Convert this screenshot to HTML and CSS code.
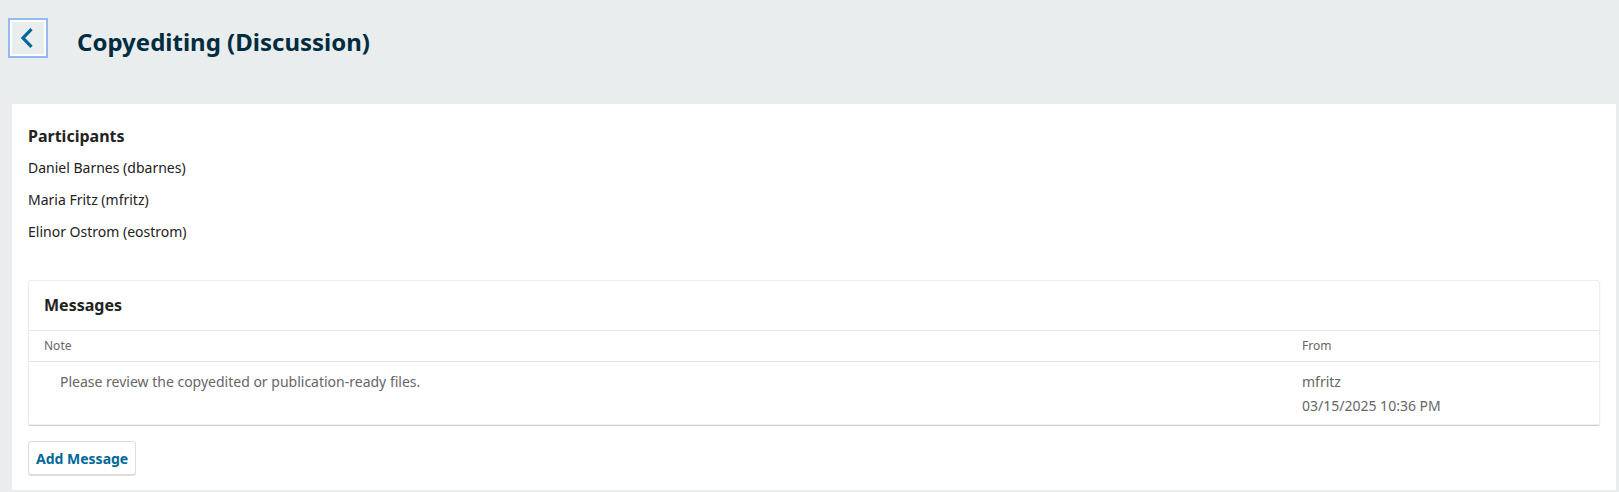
FILE: index.html
```html
<!DOCTYPE html>
<html lang="en">
<head>
<meta charset="utf-8">
<title>Copyediting (Discussion)</title>
<link rel="stylesheet" href="styles.css">
</head>
<body>
<header class="page-header">
  <button class="back-btn" aria-label="Back">
    <svg width="14" height="20" viewBox="0 0 14 20"><path d="M11.5 1.2 L3 10 L11.5 18.8" fill="none" stroke="#006798" stroke-width="3.2"/></svg>
  </button>
  <h1 class="title">Copyediting (Discussion)</h1>
</header>
<main class="panel">
  <section class="participants">
    <h2 class="section-title">Participants</h2>
    <ul class="participant-list">
      <li>Daniel Barnes (dbarnes)</li>
      <li>Maria Fritz (mfritz)</li>
      <li>Elinor Ostrom (eostrom)</li>
    </ul>
  </section>
  <section class="messages">
    <div class="messages-head"><h2 class="section-title">Messages</h2></div>
    <div class="row col-head">
      <div class="cell note">Note</div>
      <div class="cell from">From</div>
    </div>
    <div class="row msg">
      <div class="cell note"><span class="msg-text">Please review the copyedited or publication-ready files.</span></div>
      <div class="cell from">
        <div>mfritz</div>
        <div>03/15/2025 10:36 PM</div>
      </div>
    </div>
  </section>
  <button class="add-btn">Add Message</button>
</main>
</body>
</html>
```

FILE: styles.css
```css
* { box-sizing: border-box; }
html, body { margin: 0; padding: 0; }
body {
  background: #e9edee;
  font-family: "Noto Sans", "Open Sans", sans-serif;
  color: #222;
  height: 492px;
}
.page-header {
  display: flex;
  align-items: flex-start;
  height: 104px;
  padding: 18px 0 0 8px;
}
.back-btn {
  width: 40px;
  height: 40px;
  border: none;
  outline: none;
  background: #e9edee;
  box-shadow: inset 0 0 0 2px #97b9f3, inset 0 0 0 4px #fff;
  padding: 0;
  display: flex;
  align-items: center;
  justify-content: center;
}
.back-btn svg { margin: -1px 3px 0 0; }
.title {
  margin: 0 0 0 29px;
  font-size: 24px;
  line-height: 36px;
  font-weight: 700;
  color: #002c40;
  padding-top: 6px;
}
.panel {
  background: #fff;
  margin: 0 3px 0 12px;
  height: 386px;
  padding: 20px 16px 16px 16px;
}
.section-title {
  margin: 0;
  font-size: 16px;
  line-height: 24px;
  font-weight: 700;
  color: #222;
}
.participant-list {
  list-style: none;
  margin: 10px 0 0;
  padding: 0;
  font-size: 14px;
  line-height: 20px;
}
.participant-list li { margin-bottom: 12px; }
.participant-list li:last-child { margin-bottom: 0; }
.messages {
  margin-top: 38px;
  border: 1px solid #eee;
  border-radius: 2px;
  box-shadow: 0 1px 1px rgba(0,0,0,0.2);
}
.messages-head {
  padding: 12px 15px 13px;
  border-bottom: 1px solid #e6e6e6;
}
.row { display: flex; }
.cell.note { flex: 1; padding-left: 15px; }
.cell.from { width: 297px; flex: none; }
.col-head {
  font-size: 12px;
  line-height: 16px;
  color: #666;
  padding: 7px 0 7px;
  border-bottom: 1px solid #e6e6e6;
}
.msg {
  font-size: 14px;
  line-height: 24px;
  color: #666;
  padding: 8px 0 6px;
}
.msg-text { display: block; padding-left: 16px; }
.add-btn {
  margin-top: 16px;
  height: 34px;
  padding: 0 7px;
  background: #fff;
  border: 1px solid #ddd;
  border-radius: 3px;
  box-shadow: 0 1px 0 #ddd;
  font-family: inherit;
  font-size: 14px;
  font-weight: 700;
  color: #006798;
}
```
